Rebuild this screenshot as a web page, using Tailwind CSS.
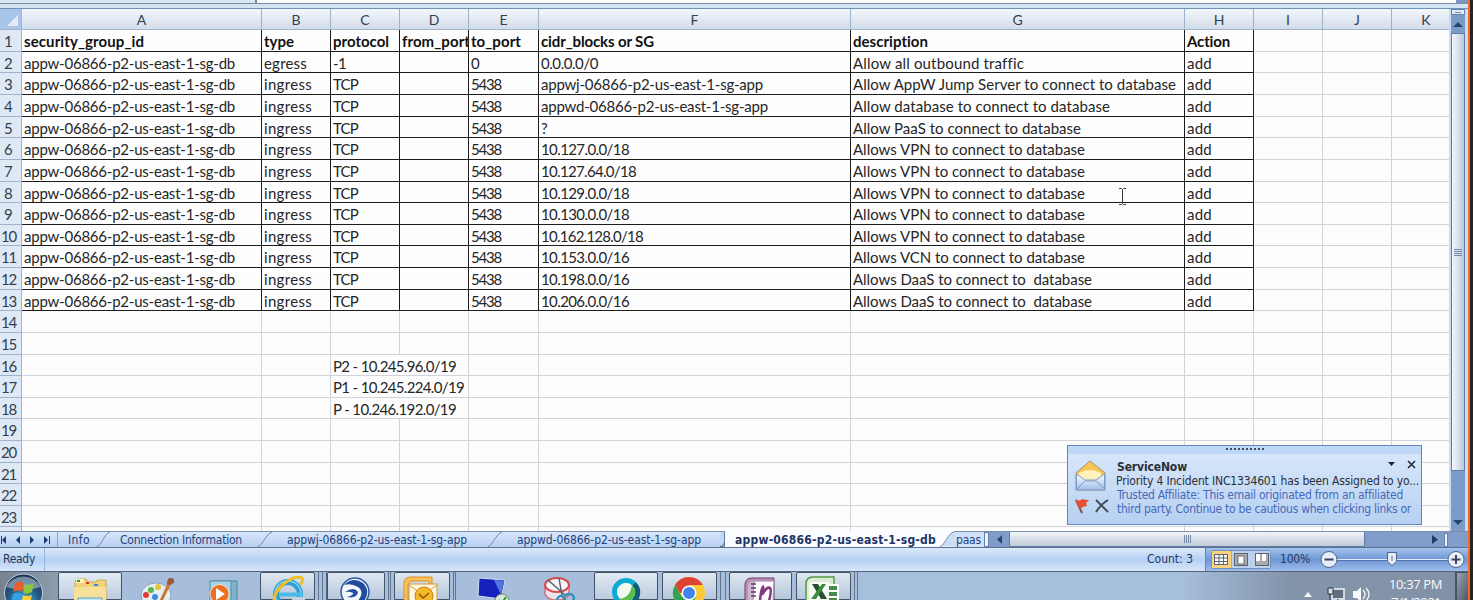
<!DOCTYPE html>
<html lang="en">
<head>
<meta charset="utf-8">
<title>Security groups</title>
<script src="https://cdn.jsdelivr.net/npm/@tailwindcss/browser@4"></script>
</head>
<body class="w-[1473px] h-[600px] overflow-hidden bg-[#262626] font-['Lato',sans-serif] text-[#262626]">
<div class="relative flex w-[1473px] h-[600px] overflow-hidden">
  <div class="flex flex-col w-[1468px] h-[600px] shrink-0">
    <!-- formula bar edge -->
    <div class="flex h-[3px] bg-[#fbfbfe]"><div class="w-[257px] bg-[#dbe8f6] border-r-2 border-[#73869e]"></div><div class="flex-1"></div><div class="w-[12px] bg-[#7996c2]"></div></div>
    <div class="h-[6px] border-t border-b border-t-[#7c8ba0] border-b-[#6d93b8] bg-[#d5e4f2]"></div>

    <div class="flex h-[522px]">
      <div class="w-[1449px] overflow-hidden bg-[#fdfdfe]">
        <div id="heads" class="flex h-[21px] w-[1461px] bg-linear-to-b from-[#f2f7fa] to-[#d3dcea] border-b border-[#9eb3cc] text-[14px] text-[#33414e]">
          <div class="relative w-[22px] bg-[#a9c4e9] border-r border-[#9eb6d6] flex items-end justify-end"><svg width="16" height="16" viewBox="0 0 16 16"><path d="M13 2V13H2Z" fill="#e3ecf6"/></svg></div>
        </div>
        <div id="grid" class="w-[1461px]"></div>
      </div>
      <!-- vertical scrollbar -->
      <div class="w-[19px] flex flex-col bg-[#7d9bc9] border-l-2 border-r-3 border-[#c9ddf2]">
        <div class="h-[6px] border border-[#6582a8] bg-[#e5eef8] flex items-center justify-center"><div class="w-[6px] h-px bg-[#6c88ad]"></div></div>
        <div class="h-[18px] flex items-center justify-center"><svg width="10" height="5" viewBox="0 0 10 5"><path d="M5 0L10 5H0Z" fill="#27466f"/></svg></div>
        <div class="h-[438px] border border-[#627ba1] bg-linear-to-r from-[#f3f6fa] via-[#dbe2ed] to-[#b9c5d9] flex flex-col items-center justify-center gap-px">
          <div class="w-[8px] h-px bg-[#7588a5]"></div><div class="w-[8px] h-px bg-[#7588a5]"></div><div class="w-[8px] h-px bg-[#7588a5]"></div><div class="w-[8px] h-px bg-[#7588a5]"></div>
        </div>
        <div class="flex-1 flex items-end justify-center pb-[6px]"><svg width="10" height="5" viewBox="0 0 10 5"><path d="M0 0H10L5 5Z" fill="#27466f"/></svg></div>
      </div>
    </div>

    <!-- sheet tabs -->
    <div class="flex h-[16px] border-t border-[#7d8ea8] bg-[#c3daf6] text-[12px] leading-[16px] font-['DejaVu_Sans_Condensed','DejaVu_Sans',sans-serif] text-[#21427c] whitespace-nowrap">
      <div class="w-[58px] border-r border-[#8ca5c8] bg-linear-to-b from-[#d9e9fb] to-[#b3cef1]">
        <svg width="57" height="15" viewBox="0 0 57 15" fill="#1c3d7a"><path d="M1 4h1v8h-1zM6 4v8L2 8zM20 4v8L16 8zM30 4v8L34 8zM44 4v8L48 8zM49 4h1v8h-1z"/></svg>
      </div>
      <div class="w-[39px] pl-[10px] bg-linear-to-b from-[#d8e6fb] to-[#b8d0f2]"><span data-w="22">Info</span></div>
      <svg width="13" height="15" viewBox="0 0 13 15" class="bg-linear-to-b from-[#d8e6fb] to-[#b8d0f2]"><path d="M13 0C7 2 5 13 0 14.500" fill="none" stroke="#7489a9"/></svg>
      <div class="w-[148px] pl-[10px] bg-linear-to-b from-[#d8e6fb] to-[#b8d0f2]"><span data-w="122">Connection Information</span></div>
      <svg width="14" height="15" viewBox="0 0 14 15" class="bg-linear-to-b from-[#d8e6fb] to-[#b8d0f2]"><path d="M14 0C8 2 5 13 0 14.500" fill="none" stroke="#7489a9"/></svg>
      <div class="w-[216px] pl-[15px] bg-linear-to-b from-[#d8e6fb] to-[#b8d0f2]"><span data-w="180">appwj-06866-p2-us-east-1-sg-app</span></div>
      <svg width="14" height="15" viewBox="0 0 14 15" class="bg-linear-to-b from-[#d8e6fb] to-[#b8d0f2]"><path d="M14 0C8 2 5 13 0 14.500" fill="none" stroke="#7489a9"/></svg>
      <div class="w-[218px] pl-[15px] bg-linear-to-b from-[#d8e6fb] to-[#b8d0f2]"><span data-w="184">appwd-06866-p2-us-east-1-sg-app</span></div>
      <svg width="5" height="15" viewBox="0 0 5 15"><path d="M4.500 0V14.500H0Q4 14 4.500 10" fill="#c3d8f4" stroke="#64799a"/></svg>
      <div class="w-[215px] pl-[10px] -mt-px h-[16px] pt-px bg-[#fbfcff] font-bold text-[#1c3565]"><span data-w="201">appw-06866-p2-us-east-1-sg-db</span></div>
      <svg width="14" height="16" viewBox="0 0 14 16" class="-mt-px bg-[#fbfcff]"><path d="M14 1C8 2 5 14 0 15.500H14Z" fill="#cadcf6"/><path d="M14 1C8 2 5 14 0 15.500" fill="none" stroke="#7489a9"/></svg>
      <div class="w-[30px] pl-[2px] bg-[#cfe0f8]"><span data-w="25">paas</span></div>
      <div class="w-[5px] border border-[#6582a8] bg-[#eef4fb]"></div>
      <div class="w-[20px] bg-[#7f9cca] flex items-center justify-center"><svg width="5" height="9" viewBox="0 0 5 9"><path d="M5 0V9L0 4.500Z" fill="#27466f"/></svg></div>
      <div class="w-[356px] border border-t-0 border-[#627ba1] bg-linear-to-b from-[#f1f4f8] to-[#c0cbdb] flex items-center justify-center gap-px">
        <div class="w-px h-[8px] bg-[#7588a5]"></div><div class="w-px h-[8px] bg-[#7588a5]"></div><div class="w-px h-[8px] bg-[#7588a5]"></div><div class="w-px h-[8px] bg-[#7588a5]"></div>
      </div>
      <div class="flex-1 bg-[#7f9cca] flex items-center justify-end gap-[6px] pr-[20px]"><svg width="6" height="9" viewBox="0 0 6 9"><path d="M0 0V9L6 4.500Z" fill="#1d3c69"/></svg><div class="w-[4px] h-[14px] border border-[#6582a8] bg-[#eef4fb]"></div></div>
    </div>

    <!-- status bar -->
    <div class="flex h-[25px] border-t border-[#5a7190] border-b border-b-[#56657a] bg-linear-to-b from-[#dbe9fa] via-[#b5d0f4] to-[#d6e6fb] text-[12px] leading-[23px] font-['DejaVu_Sans_Condensed','DejaVu_Sans',sans-serif] text-[#24365c] whitespace-nowrap">
      <div class="w-[45px] pl-[3px] border-r border-[#9cb4d6]"><span data-w="32">Ready</span></div>
      <div class="flex-1"></div>
      <div class="w-[58px]"><span data-w="46">Count: 3</span></div>
      <div class="w-[263px] flex items-center border-l border-[#6485b9] bg-linear-to-b from-[#a5c3ee] via-[#6f97d5] to-[#9dbdeb] pl-[5px]">
        <svg width="60" height="19" viewBox="0 0 60 19"><rect x=".5" y=".5" width="59" height="18" rx="1" fill="#bdd0ec" stroke="#7290bd"/><rect x="1" y="1" width="19" height="17" fill="#fbd27d"/><rect x="3.500" y="4.500" width="13" height="10" fill="#fff" stroke="#5b6577"/><path d="M3 8h14M3 11.500h14M8 4v11M12.500 4v11" stroke="#5b6577"/><rect x="20.500" y="1" width="0.500" height="17" fill="#7290bd"/><rect x="23.500" y="3.500" width="13" height="12" fill="#aaa" stroke="#5b6577"/><rect x="27" y="6" width="6" height="8" fill="#fff" stroke="#68707d"/><rect x="44.500" y="3.500" width="13" height="12" fill="#aaa" stroke="#5b6577"/><path d="M45 4h4v7h-4zM51 4h4v7h-4z" fill="#fff"/></svg>
        <div class="w-[33px] ml-[9px]"><span data-w="30">100%</span></div>
        <svg width="148" height="21" viewBox="0 0 148 21" class="ml-[7px] shrink-0"><path d="M17 10.500H130" stroke="#dfeafa"/><path d="M17 11.500H130" stroke="#5275ae"/><g fill="#e7edf6" stroke="#4c6288"><circle cx="9" cy="10.500" r="8"/><circle cx="136" cy="10.500" r="8"/><path d="M67.500 3.500h9v9l-4.500 4l-4.500-4z"/></g><path d="M4.500 10.500h9M131.500 10.500h9M136 6v9" stroke="#37445c" stroke-width="2"/><path d="M72 7v5" stroke="#5c6d8c"/></svg>
      </div>
    </div>

    <!-- taskbar -->
    <div class="flex h-[28px] bg-[#a6bedb] overflow-hidden">
      <svg width="58" height="29" viewBox="0 571 58 29" class="bg-linear-to-r from-[#76838f] to-[#8c9cad]"><defs><radialGradient id="orb" cx=".5" cy=".75" r=".7"><stop offset="0" stop-color="#4fb4e4"/><stop offset=".6" stop-color="#245a86"/><stop offset="1" stop-color="#1d3550"/></radialGradient></defs><circle cx="23.500" cy="592" r="19" fill="url(#orb)" stroke="#c4d1de"/><path d="M6 586a19 17 0 0 1 35 0q-17 5-35 0z" fill="#dbe7f1" opacity=".45"/><path d="M15 582q5-3 9 0l-2 9q-5-3-9 0z" fill="#e8612a"/><path d="M25 583q5 2 9-1l-2 9q-4 3-9 1z" fill="#8cc63e"/><path d="M13 593q4-3 9 0l-2 9q-5-2-9 0z" fill="#36a0e4"/><path d="M23 594q4 2 9 0l-2 9h-9z" fill="#fbd040"/></svg>
      <div class="w-[64px] rounded-t-[2px] border border-[#445366] bg-linear-to-b from-[#e3ebf3] to-[#bccbde]"><svg width="62" height="28" viewBox="59 572 62 28"><path d="M75 581q0-3 3-3h8l2 3h8q0-2 3-2h7v22H75z" fill="#f1d277" stroke="#c9a94c"/><path d="M76 578h8v4h-8z" fill="#fff3c0"/><path d="M77 579h3v2h-3z" fill="#18a52c"/><path d="M86 581h3v2h-3z" fill="#d6372c"/><path d="M94 583h4v2h-4z" fill="#2a8fdb"/><path d="M74 586h32v14H74z" fill="#f7e198"/><path d="M78 597h24v4H78z" fill="#bfe4f6" stroke="#63a5cd"/></svg></div>
      <svg width="138" height="29" viewBox="122 571 138 29"><ellipse cx="156" cy="594" rx="15" ry="12" fill="#e6edf3" stroke="#89a2bb"/><circle cx="146" cy="594" r="3" fill="#e03d35"/><circle cx="151" cy="589" r="3" fill="#58b947"/><circle cx="158" cy="586" r="3" fill="#e9c433"/><circle cx="155" cy="596" r="3" fill="#3492dd"/><path d="M170 581L161 600" stroke="#c97836" stroke-width="3"/><path d="M167 583q0-7 4-6q4 0 3 5l-4 2z" fill="#9a5a32"/><path d="M213 580h24v21h-24z" fill="#7fb4cb" stroke="#4e849d"/><path d="M210 580h21v21h-21z" fill="#a7d2e3" stroke="#548aa5"/><circle cx="219.500" cy="593" r="9.500" fill="#ee6f1d" stroke="#fff" stroke-width=".7"/><path d="M216 587l9 6l-9 6z" fill="#fff"/></svg>
      <div class="w-[55px] rounded-t-[2px] border border-[#445366] bg-linear-to-b from-[#e0e8f1] to-[#b5c6dc]"><svg width="53" height="28" viewBox="261 572 53 28"><circle cx="288" cy="593" r="12" fill="none" stroke="#2d9ed6" stroke-width="6"/><circle cx="288" cy="593" r="13" fill="none" stroke="#7fd3f3" stroke-width="1.500"/><path d="M279 593.500h22" stroke="#4bbbe8" stroke-width="4"/><path d="M292 598h13" stroke="#c3d0e2" stroke-width="4"/><path d="M274 600C274 588 292 573 302 577Q304 579 300 584" fill="none" stroke="#f0bf25" stroke-width="3"/></svg></div>
      <div class="w-[12px] border-r border-[#50637c] px-[3px]"><div class="h-full border-l border-r border-[#61758e]"></div></div>
      <div class="w-[58px] rounded-t-[2px] border border-[#445366] bg-linear-to-b from-[#e0e8f1] to-[#b5c6dc]"><svg width="56" height="28" viewBox="328 572 56 28"><circle cx="355" cy="591" r="14" fill="#f1f6fc" stroke="#315aa2" stroke-width="1.500"/><path d="M344 584q9-9 19-2q8 8 1 18h-6q7-9 0-14q-7-4-14-2z" fill="#204a9c"/><path d="M345 591q9-6 13 0q-1 7-11 5q7-2 6-4q-4-2-8-1z" fill="#244f9f"/></svg></div>
      <div class="w-[9px] px-[3px]"><div class="h-full border-l border-r border-[#61758e]"></div></div>
      <div class="w-[56px] rounded-t-[2px] border border-[#445366] bg-linear-to-b from-[#e0e8f1] to-[#b5c6dc]"><svg width="54" height="28" viewBox="395 572 54 28"><path d="M404 600V582q0-6 7-6h21v10h-3v-6h-16q-5 0-5 5v15z" fill="#f8c055" stroke="#d9912d"/><path d="M409 583h28v18h-28z" fill="#fff6df" stroke="#cf9b42"/><path d="M409 584l14 10l14-10" fill="none" stroke="#d99e39"/><circle cx="424" cy="595" r="9" fill="#f3b928" stroke="#c47f14"/><path d="M419 593l4 4l6-5" fill="none" stroke="#8a580d" stroke-width="1.500"/></svg></div>
      <div class="w-[9px] px-[3px]"><div class="h-full border-l border-r border-[#61758e]"></div></div>
      <svg width="135" height="29" viewBox="459 571 135 29"><path d="M479 577l26 2l-4 19l-23-3z" fill="#1421bb" stroke="#d5dfeb"/><path d="M494 579l10 1l-3 14z" fill="#4f79dd"/><circle cx="502" cy="600" r="7" fill="#dbe8db" stroke="#708a73"/><path d="M499 599l3 3l4-6" stroke="#2a9f39" stroke-width="2" fill="none"/><path d="M545 584v9q2 6 12 6t12-6v-9" fill="#e9e4ea" stroke="#cf747a" stroke-width="1.500"/><ellipse cx="557" cy="584" rx="12" ry="7" fill="#f7f7fa" stroke="#d7474c" stroke-width="2"/><path d="M548 579l17 15M559 577l3 18" stroke="#59636d" stroke-width="1.500"/><ellipse cx="569" cy="597" rx="5" ry="4" fill="none" stroke="#338fb8" stroke-width="2.500"/><ellipse cx="561" cy="600" rx="4" ry="5" fill="none" stroke="#338fb8" stroke-width="2.500"/></svg>
      <div class="w-[64px] rounded-t-[2px] border border-[#445366] bg-linear-to-b from-[#e3ebf3] to-[#bccbde]"><svg width="62" height="28" viewBox="595 572 62 28"><circle cx="626" cy="591" r="11.500" fill="#fff" stroke="#0dabd4" stroke-width="5"/><path d="M634 583a11.500 11.500 0 0 1 0 17" fill="none" stroke="#125f77" stroke-width="5"/><circle cx="626" cy="591" r="9" fill="#f2faf0"/><path d="M632 584q7 8-1 15q-7 4-12-1q11-1 13-14z" fill="#5dbd48"/></svg></div>
      <div class="w-[4px]"></div>
      <div class="w-[55px] rounded-t-[2px] border border-[#445366] bg-linear-to-b from-[#e0e8f1] to-[#b5c6dc]"><svg width="53" height="28" viewBox="663 572 53 28"><circle cx="689" cy="592" r="16" fill="#fcc934"/><path d="M675.100 584A16 16 0 0 1 702.900 584H689z" fill="#dd4236"/><path d="M675.100 584A16 16 0 0 0 689 608L696 596H682z" fill="#31a350"/><path d="M675.100 584H689V592H680z" fill="#dd4236"/><circle cx="689" cy="592" r="7.500" fill="#fff"/><circle cx="689" cy="592" r="6" fill="#4284ef"/></svg></div>
      <div class="w-[12px] px-[3px]"><div class="h-full border-l border-r border-[#61758e]"></div></div>
      <div class="w-[63px] rounded-t-[2px] border border-[#445366] bg-linear-to-b from-[#e0e8f1] to-[#b5c6dc]"><svg width="61" height="28" viewBox="730 572 61 28"><path d="M745 601V584q0-7 7-7h22v24z" fill="#b692b5" stroke="#6d3c71"/><path d="M748 601V586q0-6 6-6h16v21z" fill="#cfb4cd"/><path d="M754 580h20l-1 21h-20z" fill="#fdfafd" stroke="#a889a8"/><path d="M751 583h5M751 587h5M751 591h5M751 595h5" stroke="#5c3e5e" stroke-width="1.500"/><path d="M760 600q1-12 3-14q1 3-1 8q5-9 8-7q2 2-1 13" fill="none" stroke="#80397d" stroke-width="2.500"/></svg></div>
      <div class="w-[4px]"></div>
      <div class="w-[55px] rounded-t-[2px] border border-[#445366] bg-linear-to-b from-[#e0e8f1] to-[#b5c6dc]"><svg width="53" height="28" viewBox="797 572 53 28"><path d="M806 601V583q0-7 7-7h21v25z" fill="#dcebd3" stroke="#559a3e" stroke-width="1.500"/><path d="M823 583h16v18h-16z" fill="#fff"/><path d="M828 585h9v4h-9zM828 591h9v4h-9zM828 597h9v4h-9z" fill="#428b4b"/><path d="M809 581h20v20h-20z" fill="#f6faf4"/><path d="M812 583h6l9 15h-6z" fill="#24502c"/><path d="M826 583h-4l-11 15h5z" fill="#3b8b41"/></svg></div>
      <div class="w-[10px] px-[3px]"><div class="h-full border-l border-r border-[#61758e]"></div></div>
      <div class="flex-1 bg-linear-to-r from-[#a6bfdc] from-75% to-[#8394aa]"></div>
      <div class="w-[167px] flex bg-linear-to-r from-[#8394aa] to-[#8291a6]">
        <svg width="90" height="29" viewBox="1288 571 90 29" fill="none"><path d="M1304 596h8l-4-5z" fill="#f4f7fa"/><path d="M1332 588h12v10h-12z" fill="#5f6e80" stroke="#f2f5f8" stroke-width="1.500"/><path d="M1328 587h5v6h-5zM1330 593v8M1338 598v4" fill="#d9e1e8" stroke="#293541"/><path d="M1353 590h4l4-4v15l-4-4h-4z" fill="#f8fafc"/><path d="M1363 589q4 4 0 9M1366 587q6 6 0 13" stroke="#f3f7fa" stroke-width="1.300"/></svg>
        <div class="flex-1 pt-[2px] text-[13px] leading-[21px] text-[#f8fafc] font-['Open_Sans',sans-serif] pl-[11px] whitespace-nowrap"><div><span data-w="53">10:37 PM</span></div><div class="leading-[14px] pl-[2px]"><span data-w="50">7/1/2021</span></div></div>
      </div>
      <div class="w-[13px] border-l-2 border-t border-[#465362] bg-linear-to-br from-[#98a4b3] to-[#4e5967]"></div>
    </div>
  </div>
  <div class="w-[2px] bg-[#f2672b]"></div>
  <div class="w-[3px] bg-[#262321]"></div>

  <!-- text cursor -->
  <svg class="absolute left-[1118px] top-[188px]" width="9" height="17" viewBox="0 0 9 17"><path d="M1 .5h2.500l1 1l1-1H8M1 16.500h2.500l1-1l1 1H8M4.500 1.500v14" fill="none" stroke="#3b3b3b"/></svg>

  <!-- mail alert -->
  <div class="absolute left-[1067px] top-[445px] w-[355px] h-[80px] border border-[#6284b9] bg-linear-to-b from-[#d9e8fb]/95 to-[#b3cef1]/95 font-['DejaVu_Sans_Condensed','DejaVu_Sans',sans-serif] text-[12px] leading-[14px] whitespace-nowrap">
    <div class="h-[8px] bg-[#b4d0f3]/70 flex justify-center pt-[2px]">
      <div class="w-[38px] h-[2px] bg-[repeating-linear-gradient(90deg,#3d4a60_0_2px,transparent_2px_4px)]"></div>
    </div>
    <div class="flex">
      <svg width="49" height="68" viewBox="1068 454 49 68" class="shrink-0"><defs><linearGradient id="env" x2="0" y2="1"><stop stop-color="#fff"/><stop offset="1" stop-color="#9ebce9"/></linearGradient></defs><path d="M1076 473l14-12l15 12v17h-29z" fill="#f6c757" stroke="#a98d57"/><path d="M1079 473q11-6 22 0v8h-22z" fill="#fff2bd"/><path d="M1076.500 474l10 7h8l10-7v16h-28z" fill="url(#env)" stroke="#7e9dca"/><path d="M1077 489l9-9h9l10 9" fill="none" stroke="#7797c8"/><path d="M1076 500l6 13" stroke="#7c5148" stroke-width="2"/><path d="M1075 499q4 3 7 0q3 1 7 1l-3 3l1 3q-4 0-7 3z" fill="#e9502f"/><path d="M1096 500l12 12M1108 500q-7 4-12 12" stroke="#434c59" stroke-width="2" fill="none"/></svg>
      <div class="flex-1 pt-[6px] text-[#2a3038]">
        <div class="flex justify-between"><span class="font-bold" data-w="70">ServiceNow</span><svg width="30" height="10" viewBox="0 0 30 10" class="mr-[3px]"><path d="M0 2h7L3.500 6z" fill="#20252c"/><path d="M20 1l7 7M27 1l-7 7" stroke="#20252c" stroke-width="1.500"/></svg></div>
        <div class="-ml-px"><span data-w="303">Priority 4 Incident INC1334601 has been Assigned to yo...</span></div>
        <div class="text-[#4669b8]"><span data-w="286">Trusted Affiliate: This email originated from an affiliated</span></div>
        <div class="text-[#4669b8]"><span data-w="294">third party. Continue to be cautious when clicking links or</span></div>
      </div>
    </div>
  </div>
</div>
<script>
const widths = [240, 69, 69, 69, 70, 312, 334, 69, 69, 69, 69];
const heads = document.getElementById('heads');
widths.forEach((w, i) => {
  const c = document.createElement('div');
  c.className = 'shrink-0 flex items-center justify-center border-r border-[#9eb3cc] pt-px';
  c.style.width = w + 'px';
  c.textContent = 'ABCDEFGHIJK'[i];
  heads.appendChild(c);
});
const sg = ['appw-06866-p2-us-east-1-sg-db', 211];
const rule = (cidr, cw, desc, dw) => [sg, ['ingress', 48], ['TCP', 25], null, ['5438', 30], [cidr, cw], [desc, dw], ['add', 25]];
const vpn = 'Allows VPN to connect to database';
const daas = 'Allows DaaS to connect to \u00a0database';
const rows = [
  [['security_group_id', 120], ['type', 30], ['protocol', 56], ['from_port', 68], ['to_port', 50], ['cidr_blocks or SG', 113], ['description', 75], ['Action', 43]],
  [sg, ['egress', 43], ['-1', 13], null, ['0', 7], ['0.0.0.0/0', 57], ['Allow all outbound traffic', 171], ['add', 25]],
  rule('appwj-06866-p2-us-east-1-sg-app', 222, 'Allow AppW Jump Server to connect to database', 323),
  rule('appwd-06866-p2-us-east-1-sg-app', 227, 'Allow database to connect to database', 257),
  rule('?', 7, 'Allow PaaS to connect to database', 228),
  rule('10.127.0.0/18', 88, vpn, 232),
  rule('10.127.64.0/18', 95, vpn, 232),
  rule('10.129.0.0/18', 88, vpn, 232),
  rule('10.130.0.0/18', 88, vpn, 232),
  rule('10.162.128.0/18', 102, vpn, 232),
  rule('10.153.0.0/16', 88, 'Allows VCN to connect to database', 232),
  rule('10.198.0.0/16', 88, daas, 239),
  rule('10.206.0.0/16', 88, daas, 239)
];
rows[15] = [null, null, ['P2 - 10.245.96.0/19', 123]];
rows[16] = [null, null, ['P1 - 10.245.224.0/19', 131]];
rows[17] = [null, null, ['P - 10.246.192.0/19', 123]];
const grid = document.getElementById('grid');
let top0 = 30;
for (let r = 0; r < 24; r++) {
  const bottom = Math.round(30.2 + (r + 1) * 21.62);
  const row = document.createElement('div');
  row.className = 'flex text-[15px] leading-[18px] whitespace-nowrap';
  row.style.height = (bottom - top0) + 'px';
  top0 = bottom;
  const n = document.createElement('div');
  n.className = 'w-[22px] shrink-0 flex items-center pt-px bg-[#dfe9f5] border-r border-b border-[#9eb3cc] text-[#33414e] ' + (r < 9 ? 'pl-[4px]' : 'pl-[1px]');
  n.innerHTML = r < 23 ? '<span data-w="' + (r < 9 ? 7 : 15) + '">' + (r + 1) + '</span>' : '';
  row.appendChild(n);
  widths.forEach((w, i) => {
    const c = document.createElement('div');
    const spill = r >= 15 && r <= 17 && i === 2;
    c.className = 'shrink-0 flex items-center pl-[2px] pt-px border-b ' +
      (r < 13 && i < 8 ? 'border-r border-[#1c1c1c] overflow-hidden' : spill ? 'border-[#d0d3d9]' : 'border-r border-[#d0d3d9]') +
      (r === 0 ? ' font-bold text-[#111]' : '');
    c.style.width = w + 'px';
    const v = (rows[r] || [])[i];
    if (v) {
      const s = document.createElement('span');
      s.dataset.w = v[1];
      s.textContent = v[0];
      c.appendChild(s);
    }
    row.appendChild(c);
  });
  grid.appendChild(row);
}
function fit() {
  document.querySelectorAll('[data-w]').forEach(s => {
    s.style.letterSpacing = '0.01px';
    let gap = 0.01;
    for (let k = 0; k < 3; k++) {
      gap += (s.dataset.w - s.getBoundingClientRect().width) / s.textContent.length;
      s.style.letterSpacing = gap.toFixed(3) + 'px';
    }
  });
}
fit();
window.addEventListener('load', fit);
document.fonts.ready.then(fit);
requestAnimationFrame(() => requestAnimationFrame(fit));
</script>
</body>
</html>
